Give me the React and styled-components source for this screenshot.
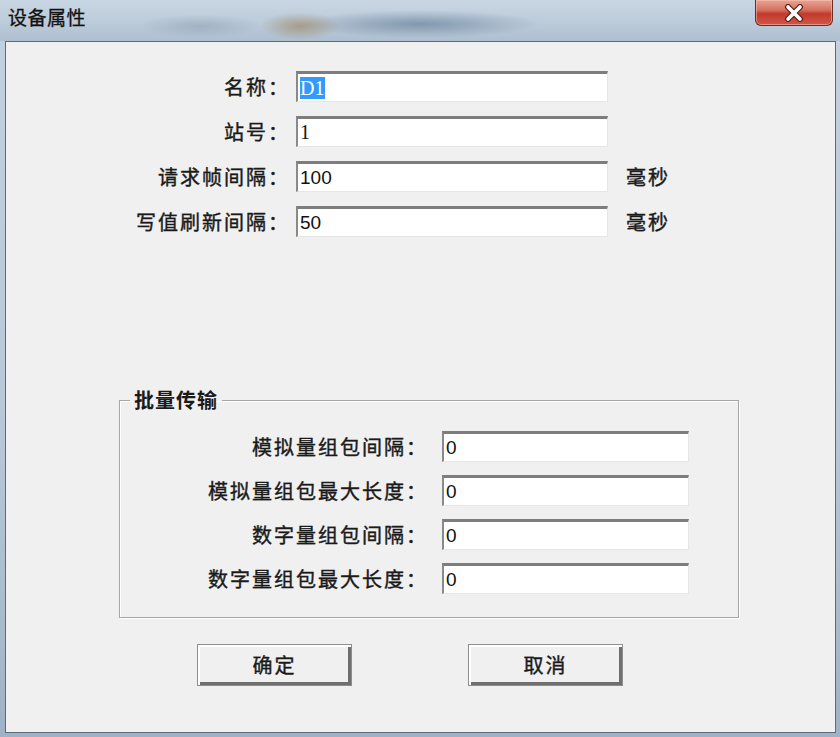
import React from 'react';
import styled, { createGlobalStyle } from 'styled-components';

const Global = createGlobalStyle`
  html, body {
    margin: 0;
    padding: 0;
    background: #f0f0f0;
  }
`;

const Window = styled.div`
  width: 840px;
  height: 737px;
  display: flex;
  flex-direction: column;
  box-sizing: border-box;
  padding: 0 4px 4px 5px;
  background: linear-gradient(180deg, #c3d1df 0%, #b7c7d7 60%, #9fb2c6 100%);
  font-family: "Noto Sans CJK SC", "Liberation Sans", sans-serif;
`;

const TitleBar = styled.div`
  height: 41px;
  flex: none;
  display: flex;
  align-items: flex-start;
  justify-content: space-between;
  margin: 0 -4px 0 -5px;
  padding: 0 7px 0 8px;
  background:
    radial-gradient(ellipse 40px 14px at 300px 26px, rgba(150, 120, 70, 0.55), transparent),
    radial-gradient(ellipse 120px 14px at 420px 24px, rgba(60, 90, 120, 0.45), transparent),
    radial-gradient(ellipse 60px 12px at 200px 26px, rgba(90, 110, 130, 0.25), transparent),
    linear-gradient(180deg, #c9d6e3 0%, #bccbda 55%, #aebfd0 100%);
`;

const Caption = styled.div`
  font-size: 19px;
  line-height: 20px;
  margin-top: 7px;
  color: #111;
  letter-spacing: 0.5px;
  -webkit-text-stroke: 0.3px #111;
`;

const CloseButton = styled.div`
  width: 78px;
  height: 26px;
  box-sizing: border-box;
  display: flex;
  align-items: center;
  justify-content: center;
  border: 1px solid #6a2c25;
  border-top: none;
  border-radius: 0 0 6px 6px;
  background: linear-gradient(180deg, #e6a595 0%, #d7705f 40%, #c23a2b 55%, #d0574a 100%);
  box-shadow: inset 0 0 0 1px rgba(255, 200, 190, 0.5);
`;

const Client = styled.div`
  flex: 1;
  border: 1px solid #5b6b7c;
  background: #f0f0f0;
  display: flex;
  flex-direction: column;
`;

const Form = styled.div`
  display: grid;
  grid-template-columns: ${p => p.labelWidth}px ${p => p.fieldWidth}px ${p => (p.withUnit ? 'auto' : '')};
  column-gap: ${p => p.colGap}px;
  row-gap: ${p => p.rowGap}px;
  align-items: center;
`;

const TopForm = styled(Form)`
  margin-top: 29px;
`;

const Label = styled.div`
  font-size: 20px;
  line-height: 31px;
  letter-spacing: 2px;
  color: #1a1a1a;
  -webkit-text-stroke: 0.4px #1a1a1a;
  text-align: right;
  white-space: nowrap;
`;

const Field = styled.div`
  height: 31px;
  box-sizing: border-box;
  background: #fff;
  border-style: solid;
  border-width: 3px 1px 1px 2px;
  border-color: #7d7d7d #e6e6e6 #e6e6e6 #8a8a8a;
  padding-left: 2px;
  display: flex;
  align-items: center;
  font-family: ${p => (p.serif ? '"Liberation Serif", serif' : '"Liberation Sans", sans-serif')};
  font-size: ${p => (p.serif ? 20 : 19)}px;
  color: #111;
`;

const Selected = styled.span`
  background: #3399ff;
  color: #fff;
  line-height: 22px;
  padding-right: 1px;
`;

const Unit = styled.div`
  font-size: 20px;
  letter-spacing: 2px;
  color: #1a1a1a;
  -webkit-text-stroke: 0.4px #1a1a1a;
  margin-left: 12px;
`;

const Group = styled.fieldset`
  margin: 152px 0 0 113px;
  width: 620px;
  min-width: 0;
  box-sizing: border-box;
  padding: 20px 0 23px 0;
  border: 1px solid #a6a6a6;
  box-shadow: 1px 1px 0 #fff, inset 1px 1px 0 #fff;
`;

const Legend = styled.legend`
  margin-left: 10px;
  padding: 0 4px;
  font-size: 20px;
  line-height: 22px;
  letter-spacing: 1px;
  color: #1a1a1a;
  font-weight: 700;
`;

const ButtonRow = styled.div`
  display: flex;
  gap: 116px;
  margin: 26px 0 0 191px;
`;

const Button = styled.button`
  width: 155px;
  height: 42px;
  box-sizing: border-box;
  background: #f0f0f0;
  border: 1px solid #8e8e8e;
  box-shadow: inset 2px 2px 0 #ffffff, inset -3px -3px 0 #6f6f6f;
  font-family: "Noto Sans CJK SC", sans-serif;
  font-size: 20px;
  letter-spacing: 2px;
  color: #1a1a1a;
  -webkit-text-stroke: 0.4px #1a1a1a;
  padding: 0 0 2px 0;
`;

const topRows = [
  { label: '名称：', value: 'D1', selected: true, serif: true },
  { label: '站号：', value: '1', serif: true },
  { label: '请求帧间隔：', value: '100', unit: '毫秒' },
  { label: '写值刷新间隔：', value: '50', unit: '毫秒' },
];

const groupRows = [
  { label: '模拟量组包间隔：', value: '0' },
  { label: '模拟量组包最大长度：', value: '0' },
  { label: '数字量组包间隔：', value: '0' },
  { label: '数字量组包最大长度：', value: '0' },
];

const CloseIcon = () => (
  <svg width="22" height="18" viewBox="0 0 22 18">
    <path d="M5 3 L17 15 M17 3 L5 15" stroke="#5a1f1a" strokeWidth="6" strokeLinecap="round" />
    <path d="M5 3 L17 15 M17 3 L5 15" stroke="#ffffff" strokeWidth="3.6" strokeLinecap="round" />
  </svg>
);

export default function App() {
  return (
    <Window>
      <Global />
      <TitleBar>
        <Caption>设备属性</Caption>
        <CloseButton>
          <CloseIcon />
        </CloseButton>
      </TitleBar>
      <Client>
        <TopForm labelWidth={284} fieldWidth={312} colGap={6} rowGap={14} withUnit>
          {topRows.map(r => (
            <React.Fragment key={r.label}>
              <Label>{r.label}</Label>
              <Field serif={r.serif}>
                {r.selected ? <Selected>{r.value}</Selected> : r.value}
              </Field>
              {r.unit ? <Unit>{r.unit}</Unit> : <span />}
            </React.Fragment>
          ))}
        </TopForm>

        <Group>
          <Legend>批量传输</Legend>
          <Form labelWidth={308} fieldWidth={247} colGap={14} rowGap={13}>
            {groupRows.map(r => (
              <React.Fragment key={r.label}>
                <Label>{r.label}</Label>
                <Field>{r.value}</Field>
              </React.Fragment>
            ))}
          </Form>
        </Group>

        <ButtonRow>
          <Button>确定</Button>
          <Button>取消</Button>
        </ButtonRow>
      </Client>
    </Window>
  );
}
